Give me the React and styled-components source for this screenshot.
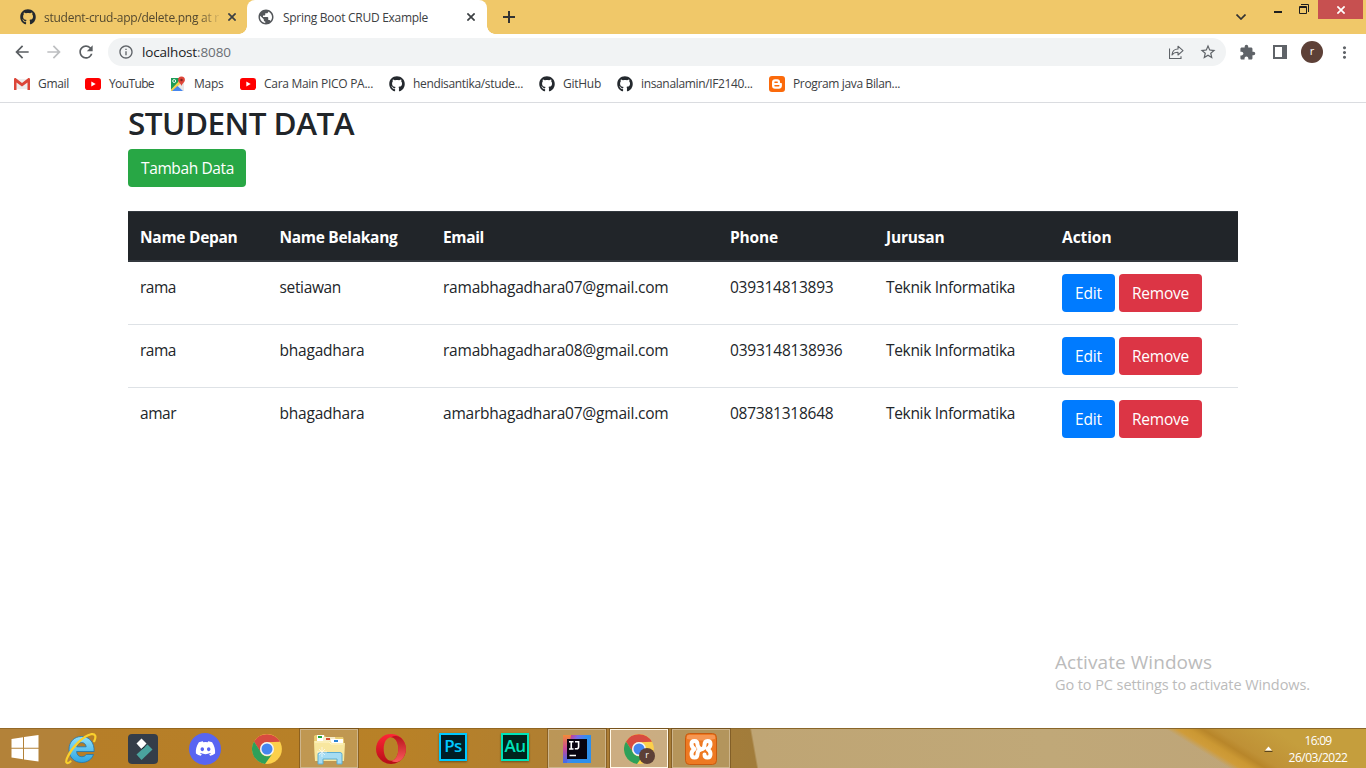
import React, { useLayoutEffect, useRef, useState } from "react";
import styled, { createGlobalStyle } from "styled-components";
import {
  MdArrowBack,
  MdArrowForward,
  MdRefresh,
  MdInfoOutline,
  MdStarBorder,
  MdExtension,
  MdMoreVert,
  MdPublic,
} from "react-icons/md";
import { FaGithub, FaDiscord } from "react-icons/fa";

const GlobalStyle = createGlobalStyle`
  *, *::before, *::after { box-sizing: border-box; }
  body {
    margin: 0;
    background: #fff;
    color: #212529;
    font-family: "Open Sans", "Noto Sans", sans-serif;
    overflow: hidden;
  }
  svg { display: block; flex: none; }
`;

/* ---------- text set to a fixed measure ---------- */

const Measured = styled.span`
  display: inline-block;
  white-space: nowrap;
`;

function Text({ w, children }) {
  const ref = useRef(null);
  const [spacing, setSpacing] = useState(0);
  useLayoutEffect(() => {
    const natural = ref.current.getBoundingClientRect().width;
    setSpacing((w - natural) / children.length);
  }, [w, children]);
  return (
    <Measured ref={ref} style={{ letterSpacing: `${spacing}px` }}>
      {children}
    </Measured>
  );
}

/* ---------- browser chrome ---------- */

const Screen = styled.div`
  width: 1366px;
  height: 768px;
  display: flex;
  flex-direction: column;
  overflow: hidden;
`;

const TabStrip = styled.header`
  height: 34px;
  flex: none;
  display: flex;
  background: #f0c869;
`;

const Tab = styled.div`
  position: relative;
  display: flex;
  align-items: center;
  width: ${(p) => p.$width}px;
  height: 34px;
  padding: 0 ${(p) => p.$right}px 0 ${(p) => p.$left}px;
  font-size: 12px;
  color: ${(p) => (p.$active ? "#3c4043" : "#54492f")};
  background: ${(p) => (p.$active ? "#fff" : "transparent")};
  border-radius: ${(p) => (p.$active ? "8px 8px 0 0" : "0")};

  &::before,
  &::after {
    content: "";
    display: ${(p) => (p.$active ? "block" : "none")};
    position: absolute;
    bottom: 0;
    width: 8px;
    height: 8px;
  }
  &::before {
    left: -8px;
    background: radial-gradient(circle at 0 0, transparent 7.5px, #fff 8px);
  }
  &::after {
    right: -8px;
    background: radial-gradient(circle at 100% 0, transparent 7.5px, #fff 8px);
  }
`;

const TabTitle = styled.div`
  flex: 1;
  margin: 0 6px 0 8px;
  mask-image: ${(p) => (p.$fade ? "linear-gradient(90deg, #000 155px, transparent 178px)" : "none")};
`;

const NewTab = styled.div`
  display: flex;
  align-items: center;
  padding-left: 16px;
`;

const WindowControls = styled.div`
  margin-left: auto;
  display: flex;
  align-items: flex-start;
  padding-right: 3px;
`;

const Control = styled.div`
  display: flex;
  padding-top: ${(p) => p.$top}px;
  margin-right: ${(p) => p.$gap}px;
`;

const CloseWindow = styled.div`
  width: 45px;
  height: 19px;
  display: flex;
  align-items: center;
  justify-content: center;
  background: #c75050;
`;

const Toolbar = styled.div`
  height: 36px;
  flex: none;
  display: flex;
  align-items: center;
  padding: 0 12px 0 12px;
  color: #5f6368;
`;

const NavButton = styled.div`
  width: 20px;
  margin-right: 12px;
  color: ${(p) => (p.$muted ? "#bdbfc1" : "#5a5e62")};
`;

const AddressBar = styled.div`
  width: 1118px;
  height: 28px;
  display: flex;
  align-items: center;
  padding: 0 9px 0 10px;
  border-radius: 14px;
  background: #f1f3f4;
`;

const Url = styled.div`
  flex: 1;
  display: flex;
  margin-left: 8px;
  font-size: 13.5px;
  color: #202124;
`;

const Port = styled.span`
  color: #6b6f74;
`;

const AddressIcons = styled.div`
  display: flex;
  align-items: center;
  gap: 14px;
`;

const Extensions = styled.div`
  display: flex;
  align-items: center;
  margin-left: 13px;
`;

const Avatar = styled.div`
  width: 22px;
  height: 22px;
  margin: 0 12px 0 14px;
  border-radius: 50%;
  background: #5d4037;
  color: #fff;
  font-size: 11px;
  line-height: 20px;
  text-align: center;
`;

const PanelButton = styled.div`
  margin-left: 17px;
`;

const BookmarkBar = styled.nav`
  height: 33px;
  flex: none;
  border-bottom: 1px solid #dadce0;
  display: flex;
  align-items: center;
  padding: 0 0 5px 14px;
  font-size: 12px;
  color: #3c4043;
`;

const Bookmark = styled.div`
  display: flex;
  align-items: center;
  gap: 8px;
  width: ${(p) => p.$width}px;
`;

/* ---------- page ---------- */

const Page = styled.main`
  flex: 1;
  display: flex;
  flex-direction: column;
  padding: 0 128px;
`;

const Heading = styled.h1`
  margin: 0 0 7px;
  font-size: 31.5px;
  line-height: 39px;
  font-weight: 600;
`;

const Button = styled.button`
  height: 38px;
  width: ${(p) => p.$width}px;
  padding: 1px 0 0 13px;
  border: 0;
  border-radius: 4px;
  background: ${(p) => p.$color};
  color: #fff;
  font: 15.5px/37px "Open Sans", "Noto Sans", sans-serif;
  text-align: left;
`;

const Table = styled.div`
  width: 1110px;
  margin-top: 24px;
  font-size: 15.5px;
  line-height: 24px;
`;

const Row = styled.div`
  display: grid;
  grid-template-columns: 139.5px 163.5px 287px 156px 176px 188px;
  height: ${(p) => (p.$first ? 62 : 63)}px;
  border-top: ${(p) => (p.$first ? "0" : "1px solid #dee2e6")};
`;

const HeadRow = styled(Row)`
  height: 51px;
  background: #212529;
  color: #fff;
  font-weight: 700;
  border-top: 1px solid #32383e;
  border-bottom: 2px solid #32383e;
`;

const Cell = styled.div`
  padding: 13px 12px 0;
`;

const Actions = styled.div`
  display: flex;
  gap: 4px;
  padding: 12px;
`;

const Watermark = styled.aside`
  margin: auto -72px 33px auto;
  width: 255px;
  color: #bbb;
`;

const WatermarkTitle = styled.div`
  font-size: 19px;
  line-height: 26px;
`;

const WatermarkLine = styled.div`
  font-size: 14.5px;
  line-height: 20px;
`;

/* ---------- taskbar ---------- */

const Taskbar = styled.footer`
  height: 40px;
  flex: none;
  display: flex;
  border-top: 1px solid rgba(110, 75, 20, 0.45);
  background:
    linear-gradient(31.6deg, transparent 54px, #cf9c3a 60px, #cb9833 66px, #b8862a 73px, #bf9136 80px, #c59e3d 110px) right / 240px 100% no-repeat,
    linear-gradient(80deg, transparent 37px, #bfa574 39px, #c0a878 50%, #bda379) 719px 0 / 660px 100% no-repeat,
    linear-gradient(100deg, #b38239 0 75px, #b67e28 80px, #b88127 400px, #ad7e35 600px, #a17c3b 750px);
`;

const Start = styled.div`
  width: 50px;
  display: flex;
  align-items: center;
  justify-content: center;
`;

const TaskItem = styled.div`
  position: relative;
  width: 58px;
  height: 39px;
  margin: 0 2px;
  display: flex;
  align-items: center;
  justify-content: center;
  border: 1px solid ${(p) => (p.$state === "active" ? "#fff8e8" : p.$state === "open" ? "#cdb58c" : "transparent")};
  background: ${(p) => (p.$state === "active" ? "rgba(225,205,180,.6)" : p.$state === "open" ? "rgba(205,190,150,.38)" : "transparent")};
  box-shadow: ${(p) => (p.$state ? "0 0 0 1px rgba(90,60,20,.45)" : "none")};
`;

const Badge = styled.div`
  position: absolute;
  right: 12px;
  bottom: 3px;
  width: 16px;
  height: 16px;
  border-radius: 50%;
  background: #5d4037;
  color: #fff;
  font-size: 9px;
  line-height: 14px;
  text-align: center;
`;

const DiscordTile = styled.div`
  width: 32px;
  height: 32px;
  border-radius: 50%;
  background: #5865f2;
  color: #fff;
  display: flex;
  align-items: center;
  justify-content: center;
`;

const AdobeTile = styled.div`
  width: 28px;
  height: 28px;
  margin-top: -4px;
  border: 2px solid ${(p) => p.$color};
  background: ${(p) => p.$bg};
  color: ${(p) => p.$color};
  font: 600 17px/22px "Open Sans", sans-serif;
  letter-spacing: -0.6px;
  text-align: center;
  box-shadow: 0 1px 2px rgba(0, 0, 0, 0.4);
`;

const Tray = styled.div`
  margin-left: auto;
  display: flex;
  align-items: center;
  padding-right: 19px;
  gap: 16px;
  color: #fff;
`;

const Clock = styled.div`
  width: 58px;
  display: flex;
  flex-direction: column;
  align-items: center;
  font-size: 12px;
  line-height: 17px;
`;

/* ---------- drawings ---------- */

const CloseIcon = ({ color = "#3c4043" }) => (
  <svg width="8" height="8" viewBox="0 0 8 8" stroke={color} strokeWidth="1.7">
    <path d="M.4.4l7.2 7.2M7.6.4L.4 7.6" />
  </svg>
);

const ShareIcon = () => (
  <svg width="16" height="16" viewBox="0 0 16 16" fill="none" stroke="#5f6368" strokeWidth="1.1">
    <path d="M.5 4.500v10H12v-2.200" />
    <path d="M3 11c.3-4 2.500-6 6-6V2.200L14 6.700 9 11V8.300C6 8.300 4.300 9 3 11z" strokeLinejoin="round" />
  </svg>
);

const GmailIcon = () => (
  <svg width="16" height="12" viewBox="0 0 16 12">
    <path d="M2 1h12v10H2z" fill="#eee" />
    <path d="M0 1.200V12h2.500V4.400L8 8.600l5.500-4.200V12H16V1.200C16 .2 14.700-.3 13.800.4L8 4.900 2.200.4C1.300-.3 0 .2 0 1.200z" fill="#dc4639" />
  </svg>
);

const YoutubeIcon = () => (
  <svg width="16" height="12" viewBox="0 0 16 12">
    <rect width="16" height="12" rx="2.800" fill="#f00" />
    <path d="M6.300 3.400v5.200L10.700 6z" fill="#fff" />
  </svg>
);

const MapsIcon = () => (
  <svg width="16" height="16" viewBox="0 0 16 16">
    <path d="M1 2h13v13H1z" fill="#e8e8e8" />
    <path d="M1 2h9L8 7l-7 7z" fill="#1c9d57" />
    <path d="M1 13.500L10 4l2 2-9 9H1z" fill="#f5d04a" />
    <path d="M2 15l5.500-5 5.500 5z" fill="#4786ee" />
    <circle cx="4.200" cy="5" r="1.500" fill="none" stroke="#fff" strokeWidth=".9" />
    <path d="M11.500 .6a3.400 3.400 0 0 1 3.400 3.500c0 2.500-2.600 3-3.400 6-.8-3-3.400-3.500-3.400-6A3.400 3.400 0 0 1 11.500 .6z" fill="#df4639" />
    <circle cx="11.500" cy="4" r="1.200" fill="#7d2521" />
  </svg>
);

const BloggerIcon = () => (
  <svg width="16" height="16" viewBox="0 0 16 16">
    <rect width="16" height="16" rx="3" fill="#fb6a0b" />
    <path d="M6 3.200h2.300c1.700 0 2.700 1.100 2.700 2.500v.7c.1.500.4.600.9.600.8 0 1 .4 1 1v1.800c0 1.900-1.300 3-3 3H6c-1.800 0-3-1.200-3-3V6.200c0-1.800 1.200-3 3-3z" fill="#fff" />
    <path d="M6 6.300h2.200M6 9.800h3.800" stroke="#fb6a0b" strokeWidth="1.500" strokeLinecap="round" />
  </svg>
);

const WindowsIcon = () => (
  <svg width="28" height="27" viewBox="0 0 28 27" fill="#fff">
    <path d="M.5 4L12 2.300v10.400H.5zM13 2.100L27.500 0v12.700H13zM.5 13.700H12v10.500L.5 22.500zM13 13.700h14.500v12.900L13 24.400z" />
  </svg>
);

const ExplorerIcon = () => (
  <svg width="34" height="34" viewBox="0 0 34 34" fill="none">
    <defs>
      <linearGradient id="ie" x1="0" y1="0" x2="0" y2="1">
        <stop offset="0" stopColor="#8fe0fb" />
        <stop offset="1" stopColor="#2fa5e2" />
      </linearGradient>
    </defs>
    <path
      d="M17.500 4.500C10 4.500 5 10 5 17.500S10 30.500 17.700 30.500c5.700 0 10-3 11.800-8h-7.300c-1 1.500-2.400 2.200-4.400 2.200-3.200 0-5-1.900-5.200-5.200h17.500C30.500 10.500 25.500 4.500 17.500 4.500zm-4.800 10.300c.5-2.600 2.200-4.200 4.800-4.200 2.700 0 4.400 1.600 4.700 4.200z"
      fill="url(#ie)"
      stroke="#2175ae"
      strokeWidth=".8"
    />
    <path d="M6.500 29.500C2.500 33 .8 30.500 3.800 24.500 8 15.500 19 4 27 2.200c4.500-.9 5.500 2.300 3.200 7" stroke="#fad02c" strokeWidth="2.200" strokeLinecap="round" />
  </svg>
);

const FilmoraIcon = () => (
  <svg width="30" height="30" viewBox="0 0 30 30">
    <rect width="30" height="30" rx="4" fill="#343d49" />
    <path d="M13.500 4.500l5 5-5 5.500-5-5.500z" fill="#fff" />
    <path d="M19.500 10.500l5 5-11 10.500-5-5.500z" fill="#4aa39e" />
    <path d="M13.500 15l3-2" stroke="#17232d" strokeWidth="1" />
  </svg>
);

const ChromeIcon = () => (
  <svg width="30" height="30" viewBox="0 0 30 30">
    <circle cx="15" cy="15" r="14.900" fill="#fcd04b" />
    <path d="M2 7.500A15 15 0 0 1 28 7.800L15 8.300a6.800 6.800 0 0 0-6.400 4.600L8.500 18z" fill="#d84b40" />
    <path d="M2 7.500a15 15 0 0 0 11 22.400l7.100-9.600a6.800 6.800 0 0 1-11-1.900z" fill="#2ea05a" />
    <circle cx="15" cy="15" r="7" fill="#f5f5f5" />
    <circle cx="15" cy="15" r="5.500" fill="#4586ef" />
  </svg>
);

const FolderIcon = () => (
  <svg width="34" height="32" viewBox="0 0 34 32">
    <path d="M2 3l1.500-1H12l2 2h17l1 3v20H3z" fill="#e9cd72" />
    <path d="M5 2h7v6H5z" fill="#fff" />
    <path d="M6 3h4v2H6z" fill="#22a83c" />
    <path d="M11 4h12l1 5H11z" fill="#f7edc8" />
    <path d="M14 5h4v2h-4z" fill="#d84a2e" />
    <path d="M19 6h12v4H19z" fill="#fff" />
    <path d="M22 7h4v2h-4z" fill="#2a83d4" />
    <path d="M2 8h16l2 2h13l-1 18H3z" fill="#f8e79f" />
    <path d="M3 9h14l2 2h12" stroke="#fff6cc" fill="none" />
    <path d="M6 21.500q0-2 2-2h20q2 0 2 2V31h-5v-5H11v5H6z" fill="#a5dcf3" stroke="#5daed1" />
    <path d="M10 14v10M5 19h10M7 16l6 6M13 16l-6 6" stroke="#fff" strokeWidth=".8" opacity=".8" />
  </svg>
);

const OperaIcon = () => (
  <svg width="30" height="30" viewBox="0 0 30 30">
    <defs>
      <linearGradient id="op" x1="0" y1="0" x2="0" y2="1">
        <stop offset="0" stopColor="#ff2636" />
        <stop offset="1" stopColor="#b50d17" />
      </linearGradient>
      <linearGradient id="opr" x1="0" y1="0" x2="0" y2="1">
        <stop offset="0" stopColor="#b8141c" />
        <stop offset="1" stopColor="#f95a5c" />
      </linearGradient>
    </defs>
    <path fillRule="evenodd" d="M15 0a15 15 0 1 0 0 30 15 15 0 0 0 0-30zm0 3.200c4.200 0 7.300 5 7.300 11.800S19.200 26.800 15 26.800 7.700 21.800 7.700 15 10.800 3.200 15 3.200z" fill="url(#op)" />
    <path d="M15 3.200c4.200 0 7.300 5 7.300 11.800S19.200 26.800 15 26.800c4 2 7.500 1.200 10.200-.9a15 15 0 0 0 0-21.800C22.500 2 19 1.200 15 3.200z" fill="url(#opr)" />
  </svg>
);

const IdeaIcon = () => (
  <svg width="28" height="28" viewBox="0 0 28 28">
    <defs>
      <linearGradient id="ij" x1="0" y1="0" x2="1" y2=".6">
        <stop offset="0" stopColor="#ef5a4c" />
        <stop offset=".2" stopColor="#d23c86" />
        <stop offset=".4" stopColor="#7a6ae8" />
        <stop offset=".65" stopColor="#2e8fec" />
      </linearGradient>
      <linearGradient id="ijo" x1="0" y1="0" x2="0" y2="1">
        <stop offset="0" stopColor="#f58a38" />
        <stop offset=".5" stopColor="#c64a9a" />
        <stop offset="1" stopColor="#3c6df0" />
      </linearGradient>
    </defs>
    <rect width="28" height="28" fill="url(#ij)" />
    <path d="M0 0h8L4 28H0z" fill="url(#ijo)" />
    <rect x="4" y="4" width="20" height="20" fill="#080410" />
    <path d="M6 6.800h4.500M8.250 7v7M6 14h4.500M12 6.800h3.600v5q0 2-2 2H11.800M6.500 20.500H13" fill="none" stroke="#fff" strokeWidth="1.600" />
  </svg>
);

const XamppIcon = () => (
  <svg width="32" height="32" viewBox="0 0 32 32">
    <rect x=".5" y=".5" width="31" height="31" rx="4" fill="#ee7922" stroke="#c75a10" />
    <path d="M2 3q0-1 2-1h24q2 0 2 1v3q-14 3-28 0z" fill="#f9a468" opacity=".7" />
    <path
      d="M12.500 11.500Q12.500 8 9.500 8 6.500 8 6.500 11 6.500 14 9.500 16 6.500 18 6.500 21 6.500 24.500 9.500 24.500 12.500 24.500 12.500 21 12.500 17 16 16.500 19.500 16 19.500 12 19.500 8 22.500 8 25.500 8 25.500 11 25.500 14 22.500 16 25.500 18 25.500 21 25.500 24.500 22.500 24.500 19.500 24.500 19.500 21.500M12.500 11.500Q12.500 14.500 16 16.200"
      fill="none"
      stroke="#fff"
      strokeWidth="4"
      strokeLinecap="round"
      strokeLinejoin="round"
    />
  </svg>
);

/* ---------- data ---------- */

const bookmarks = [
  { icon: <GmailIcon />, label: "Gmail", text: 31, width: 71 },
  { icon: <YoutubeIcon />, label: "YouTube", text: 45, width: 85 },
  { icon: <MapsIcon />, label: "Maps", text: 29.5, width: 70 },
  { icon: <YoutubeIcon />, label: "Cara Main PICO PA...", text: 109, width: 149 },
  { icon: <FaGithub size={16} color="#24292e" />, label: "hendisantika/stude...", text: 110, width: 150 },
  { icon: <FaGithub size={16} color="#24292e" />, label: "GitHub", text: 38, width: 78 },
  { icon: <FaGithub size={16} color="#24292e" />, label: "insanalamin/IF2140...", text: 111.5, width: 152 },
  { icon: <BloggerIcon />, label: "Program java Bilan...", text: 107, width: 150 },
];

const columns = [
  ["Name Depan", 97.5],
  ["Name Belakang", 118],
  ["Email", 41],
  ["Phone", 48],
  ["Jurusan", 58.5],
  ["Action", 49.5],
];

const students = [
  [["rama", 36], ["setiawan", 61.5], ["ramabhagadhara07@gmail.com", 225.5], ["039314813893", 103.5], ["Teknik Informatika", 129]],
  [["rama", 36], ["bhagadhara", 85], ["ramabhagadhara08@gmail.com", 225.5], ["0393148138936", 112.5], ["Teknik Informatika", 129]],
  [["amar", 36], ["bhagadhara", 85], ["amarbhagadhara07@gmail.com", 225.5], ["087381318648", 103.5], ["Teknik Informatika", 129]],
];

export default function App() {
  return (
    <Screen>
      <GlobalStyle />
      <TabStrip>
        <Tab $width={247} $left={20} $right={11}>
          <FaGithub size={16} color="#24292e" />
          <TabTitle $fade>
            <Text w={175}>student-crud-app/delete.png at r</Text>
          </TabTitle>
          <CloseIcon />
        </Tab>
        <Tab $width={240} $left={10} $right={12} $active>
          <MdPublic size={18} color="#54575b" />
          <TabTitle>
            <Text w={145}>Spring Boot CRUD Example</Text>
          </TabTitle>
          <CloseIcon />
        </Tab>
        <NewTab>
          <svg width="12" height="12" viewBox="0 0 12 12" stroke="#333" strokeWidth="2">
            <path d="M6 0v12M0 6h12" />
          </svg>
        </NewTab>
        <WindowControls>
          <Control $top={14} $gap={28}>
            <svg width="10" height="6" viewBox="0 0 10 6" fill="none" stroke="#333" strokeWidth="1.700">
              <path d="M.5.500L5 5 9.500.500" />
            </svg>
          </Control>
          <Control $top={11} $gap={17}>
            <svg width="8" height="2" viewBox="0 0 8 2">
              <path d="M0 0h8v2H0z" fill="#1e1e1e" />
            </svg>
          </Control>
          <Control $top={4} $gap={9}>
            <svg width="10" height="10" viewBox="0 0 10 10" fill="none" stroke="#1e1e1e">
              <path d="M2 .5h7.500V8M.5 2.500h7v7h-7zM.5 3.500h7" />
            </svg>
          </Control>
          <CloseWindow>
            <CloseIcon color="#fff" />
          </CloseWindow>
        </WindowControls>
      </TabStrip>

      <Toolbar>
        <NavButton><MdArrowBack size={20} /></NavButton>
        <NavButton $muted><MdArrowForward size={20} /></NavButton>
        <NavButton><MdRefresh size={20} /></NavButton>
        <AddressBar>
          <MdInfoOutline size={16} />
          <Url>
            <Text w={55}>localhost</Text>
            <Port><Text w={34}>:8080</Text></Port>
          </Url>
          <AddressIcons>
            <ShareIcon />
            <MdStarBorder size={18} />
          </AddressIcons>
        </AddressBar>
        <Extensions>
          <MdExtension size={17} />
          <PanelButton>
            <svg width="14" height="14" viewBox="0 0 14 14">
              <path d="M0 0h14v14H0zM2 2v10h7V2z" fill="#5f6368" fillRule="evenodd" />
            </svg>
          </PanelButton>
          <Avatar>r</Avatar>
          <MdMoreVert size={19} />
        </Extensions>
      </Toolbar>

      <BookmarkBar>
        {bookmarks.map((b) => (
          <Bookmark key={b.label} $width={b.width}>
            {b.icon}
            <Text w={b.text}>{b.label}</Text>
          </Bookmark>
        ))}
      </BookmarkBar>

      <Page>
        <Heading>
          <Text w={226}>STUDENT DATA</Text>
        </Heading>
        <Button $width={118} $color="#28a745">
          <Text w={93}>Tambah Data</Text>
        </Button>
        <Table>
          <HeadRow>
            {columns.map(([name, w]) => (
              <Cell key={name}>
                <Text w={w}>{name}</Text>
              </Cell>
            ))}
          </HeadRow>
          {students.map((cells, i) => (
            <Row key={i} $first={i === 0}>
              {cells.map(([value, w], j) => (
                <Cell key={j}>
                  <Text w={w}>{value}</Text>
                </Cell>
              ))}
              <Actions>
                <Button $width={53} $color="#007bff"><Text w={27}>Edit</Text></Button>
                <Button $width={83} $color="#dc3545"><Text w={57}>Remove</Text></Button>
              </Actions>
            </Row>
          ))}
        </Table>
        <Watermark>
          <WatermarkTitle><Text w={157}>Activate Windows</Text></WatermarkTitle>
          <WatermarkLine><Text w={255}>Go to PC settings to activate Windows.</Text></WatermarkLine>
        </Watermark>
      </Page>

      <Taskbar>
        <Start><WindowsIcon /></Start>
        <TaskItem><ExplorerIcon /></TaskItem>
        <TaskItem><FilmoraIcon /></TaskItem>
        <TaskItem>
          <DiscordTile><FaDiscord size={21} /></DiscordTile>
        </TaskItem>
        <TaskItem><ChromeIcon /></TaskItem>
        <TaskItem $state="open"><FolderIcon /></TaskItem>
        <TaskItem><OperaIcon /></TaskItem>
        <TaskItem><AdobeTile $color="#00c8ff" $bg="#001d26">Ps</AdobeTile></TaskItem>
        <TaskItem><AdobeTile $color="#00e4bb" $bg="#00251e">Au</AdobeTile></TaskItem>
        <TaskItem $state="open"><IdeaIcon /></TaskItem>
        <TaskItem $state="active">
          <ChromeIcon />
          <Badge>r</Badge>
        </TaskItem>
        <TaskItem $state="open"><XamppIcon /></TaskItem>
        <Tray>
          <svg width="9" height="6" viewBox="0 0 9 6">
            <path d="M4.500.600L8 4.500H1z" fill="#fff" />
            <path d="M.5 5.500h8" stroke="#5b451c" />
          </svg>
          <Clock>
            <Text w={27}>16:09</Text>
            <Text w={59}>26/03/2022</Text>
          </Clock>
        </Tray>
      </Taskbar>
    </Screen>
  );
}
